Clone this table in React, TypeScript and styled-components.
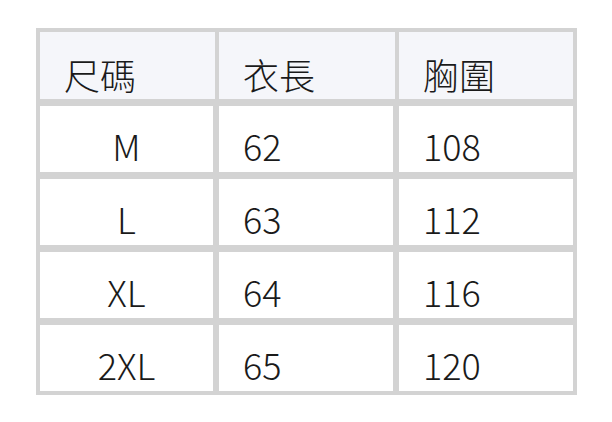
import React from "react";
import styled, { createGlobalStyle } from "styled-components";

const Global = createGlobalStyle`
  html, body { margin: 0; padding: 0; background: #ffffff; }
  body { font-family: "Noto Sans CJK TC", "Noto Sans", sans-serif; color: #1a1a1a; }
`;

const Page = styled.div`
  padding: 28px 0 0 36px;
`;

const Table = styled.div`
  width: 541px;
  box-sizing: border-box;
  background: #d3d3d3;
  padding: 4px;
  display: grid;
  grid-template-rows: 67px 66px 66px 66px 66px;
  row-gap: 7px;
`;

const HeaderRow = styled.div`
  display: grid;
  grid-template-columns: 175px 176px 174px;
  column-gap: 4px;
`;

const BodyRow = styled.div`
  display: grid;
  grid-template-columns: 173px 174px 174px;
  column-gap: 6px;
`;

const HeadCell = styled.div`
  background: #f5f6fa;
  padding: 24px 0 0 24px;
  font-size: 36px;
  line-height: 36px;
  font-weight: 300;
  white-space: nowrap;
`;

const Cell = styled.div<{ $center?: boolean }>`
  background: #ffffff;
  padding-top: 21px;
  padding-left: ${(p) => (p.$center ? "0" : "24px")};
  text-align: ${(p) => (p.$center ? "center" : "left")};
  font-size: 36px;
  line-height: 36px;
  font-weight: 300;
  white-space: nowrap;
`;

const rows = [
  ["M", "62", "108"],
  ["L", "63", "112"],
  ["XL", "64", "116"],
  ["2XL", "65", "120"],
];

export default function App() {
  return (
    <>
      <Global />
      <Page>
        <Table>
          <HeaderRow>
            <HeadCell>尺碼</HeadCell>
            <HeadCell>衣長</HeadCell>
            <HeadCell>胸圍</HeadCell>
          </HeaderRow>
          {rows.map((r) => (
            <BodyRow key={r[0]}>
              <Cell $center>{r[0]}</Cell>
              <Cell>{r[1]}</Cell>
              <Cell>{r[2]}</Cell>
            </BodyRow>
          ))}
        </Table>
      </Page>
    </>
  );
}
